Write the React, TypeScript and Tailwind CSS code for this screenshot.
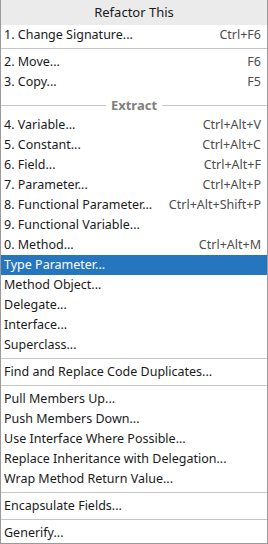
const font = { fontFamily: '"Noto Sans", "Open Sans", sans-serif' };

type Item = { label: string; shortcut?: string; selected?: boolean };

const Row = ({ label, shortcut, selected }: Item) => (
  <div
    className={
      "h-5 flex items-center justify-between pl-[3px] pr-[6px] text-[12.5px] leading-none " +
      (selected ? "bg-[#2675bf] text-white" : "text-[#1a1a1a]")
    }
  >
    <span>{label}</span>
    {shortcut && <span className={selected ? "text-white" : "text-[#4d4d4d]"}>{shortcut}</span>}
  </div>
);

const Sep = () => (
  <div className="h-[7px] flex items-center">
    <div className="h-px w-full bg-[#c6c6c6]" />
  </div>
);

const extract: Item[] = [
  { label: "4. Variable...", shortcut: "Ctrl+Alt+V" },
  { label: "5. Constant...", shortcut: "Ctrl+Alt+C" },
  { label: "6. Field...", shortcut: "Ctrl+Alt+F" },
  { label: "7. Parameter...", shortcut: "Ctrl+Alt+P" },
  { label: "8. Functional Parameter...", shortcut: "Ctrl+Alt+Shift+P" },
  { label: "9. Functional Variable..." },
  { label: "0. Method...", shortcut: "Ctrl+Alt+M" },
  { label: "Type Parameter...", selected: true },
  { label: "Method Object..." },
  { label: "Delegate..." },
  { label: "Interface..." },
  { label: "Superclass..." },
];

const members: Item[] = [
  { label: "Pull Members Up..." },
  { label: "Push Members Down..." },
  { label: "Use Interface Where Possible..." },
  { label: "Replace Inheritance with Delegation..." },
  { label: "Wrap Method Return Value..." },
];

export default function App() {
  return (
    <div className="w-[268px] h-[544px] bg-white border border-t-0 border-[#9a9a9a] overflow-hidden" style={font}>
      <div className="h-[25px] bg-[#ebebeb] flex items-center justify-center text-[13px] text-[#1a1a1a]">
        Refactor This
      </div>
      <Row label="1. Change Signature..." shortcut="Ctrl+F6" />
      <Sep />
      <Row label="2. Move..." shortcut="F6" />
      <Row label="3. Copy..." shortcut="F5" />

      {/* titled separator */}
      <div className="h-[23px] flex items-center gap-[5px] pt-[4px]">
        <div className="h-px flex-1 bg-[#c6c6c6]" />
        <span className="text-[13px] font-bold text-[#808080] leading-none">Extract</span>
        <div className="h-px flex-1 bg-[#c6c6c6]" />
      </div>

      {extract.map((it) => (
        <Row key={it.label} {...it} />
      ))}
      <Sep />
      <Row label="Find and Replace Code Duplicates..." />
      <Sep />
      {members.map((it) => (
        <Row key={it.label} {...it} />
      ))}
      <Sep />
      <Row label="Encapsulate Fields..." />
      <Sep />
      <Row label="Generify..." />
    </div>
  );
}
